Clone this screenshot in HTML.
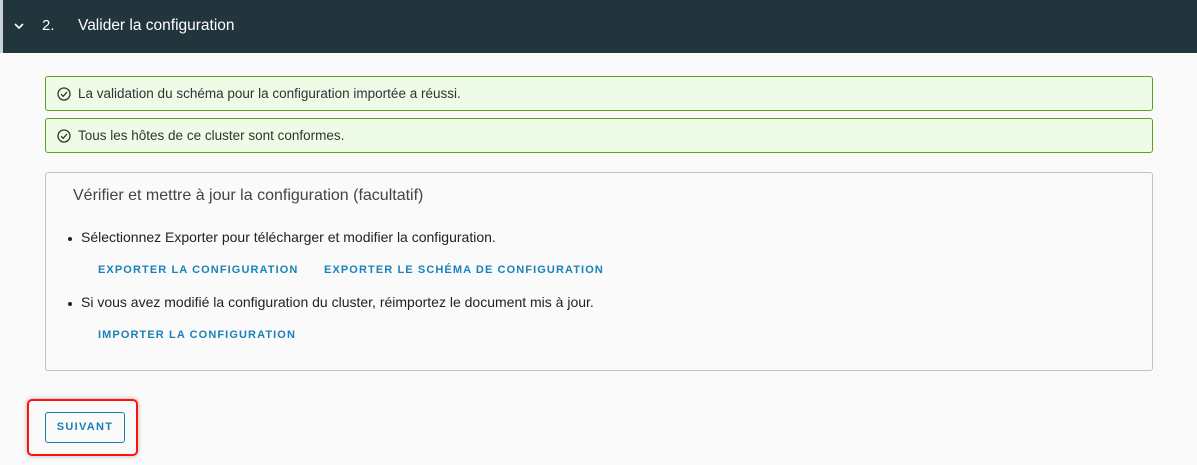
<!DOCTYPE html>
<html><head><meta charset="utf-8"><style>
*{box-sizing:border-box;margin:0;padding:0}
body{width:1197px;height:465px;background:#fafafa;font-family:"Liberation Sans",sans-serif;position:relative;overflow:hidden;color:#222}
.hdr{position:absolute;left:0;top:0;width:1197px;height:53px;background:#22343c;border-left:3px solid #c9d2d6}
.hdr .chev{position:absolute;left:10px;top:20px}
.hdr .num{position:absolute;left:39px;top:17px;color:#fff;font-size:15px}
.hdr .ttl{position:absolute;left:75px;top:17px;color:#fff;font-size:15.5px}
.ok{position:absolute;left:45px;width:1108px;height:35px;background:#eefbe6;border:1px solid #5aa220;border-radius:3px;font-size:13.5px;color:#333}
.ok svg{position:absolute;left:11px;top:10px}
.ok span{position:absolute;left:32px;top:9px}
.card{position:absolute;left:45px;top:172px;width:1108px;height:199px;border:1px solid #b8c4cc;border-radius:3px;background:#fafafa}
.t{position:absolute;font-size:14px;color:#222}
.lnk{position:absolute;font-size:11px;color:#1a82b8;letter-spacing:1.1px;font-weight:bold}
.dot{position:absolute;width:4px;height:4px;border-radius:50%;background:#222}
.btn{position:absolute;left:45px;top:412px;width:80px;height:31px;border:1px solid #1a7fb0;border-radius:3px;color:#1a7fb0;font-size:11px;letter-spacing:1.3px;font-weight:bold;text-align:center;line-height:29px}
.red{position:absolute;left:27px;top:399px;width:111px;height:57px;border:2px solid #f11;border-radius:5px;box-shadow:0 0 5px rgba(0,0,0,.3)}
</style></head><body>
<div class="hdr">
<svg class="chev" width="12" height="12" viewBox="0 0 12 12"><path d="M2 4 L6 8 L10 4" stroke="#fff" stroke-width="1.6" fill="none"/></svg>
<span class="num">2.</span><span class="ttl">Valider la configuration</span></div>
<div class="ok" style="top:76px"><svg width="14" height="14" viewBox="0 0 14 14"><circle cx="7" cy="7" r="6" stroke="#333" stroke-width="1.3" fill="none"/><path d="M4 7.2 L6.2 9.3 L10 5" stroke="#333" stroke-width="1.3" fill="none"/></svg><span>La validation du schéma pour la configuration importée a réussi.</span></div>
<div class="ok" style="top:118px"><svg width="14" height="14" viewBox="0 0 14 14"><circle cx="7" cy="7" r="6" stroke="#333" stroke-width="1.3" fill="none"/><path d="M4 7.2 L6.2 9.3 L10 5" stroke="#333" stroke-width="1.3" fill="none"/></svg><span>Tous les hôtes de ce cluster sont conformes.</span></div>
<div class="card"></div>
<div class="t" style="left:73px;top:187px;font-size:16px;color:#444">Vérifier et mettre à jour la configuration (facultatif)</div>
<div class="dot" style="left:68px;top:237px"></div>
<div class="t" style="left:81px;top:229px">Sélectionnez Exporter pour télécharger et modifier la configuration.</div>
<div class="lnk" style="left:98px;top:264px">EXPORTER LA CONFIGURATION</div>
<div class="lnk" style="left:324px;top:264px">EXPORTER LE SCHÉMA DE CONFIGURATION</div>
<div class="dot" style="left:68px;top:302px"></div>
<div class="t" style="left:81px;top:294px">Si vous avez modifié la configuration du cluster, réimportez le document mis à jour.</div>
<div class="lnk" style="left:98px;top:329px">IMPORTER LA CONFIGURATION</div>
<div class="red"></div>
<div class="btn">SUIVANT</div>
</body></html>
